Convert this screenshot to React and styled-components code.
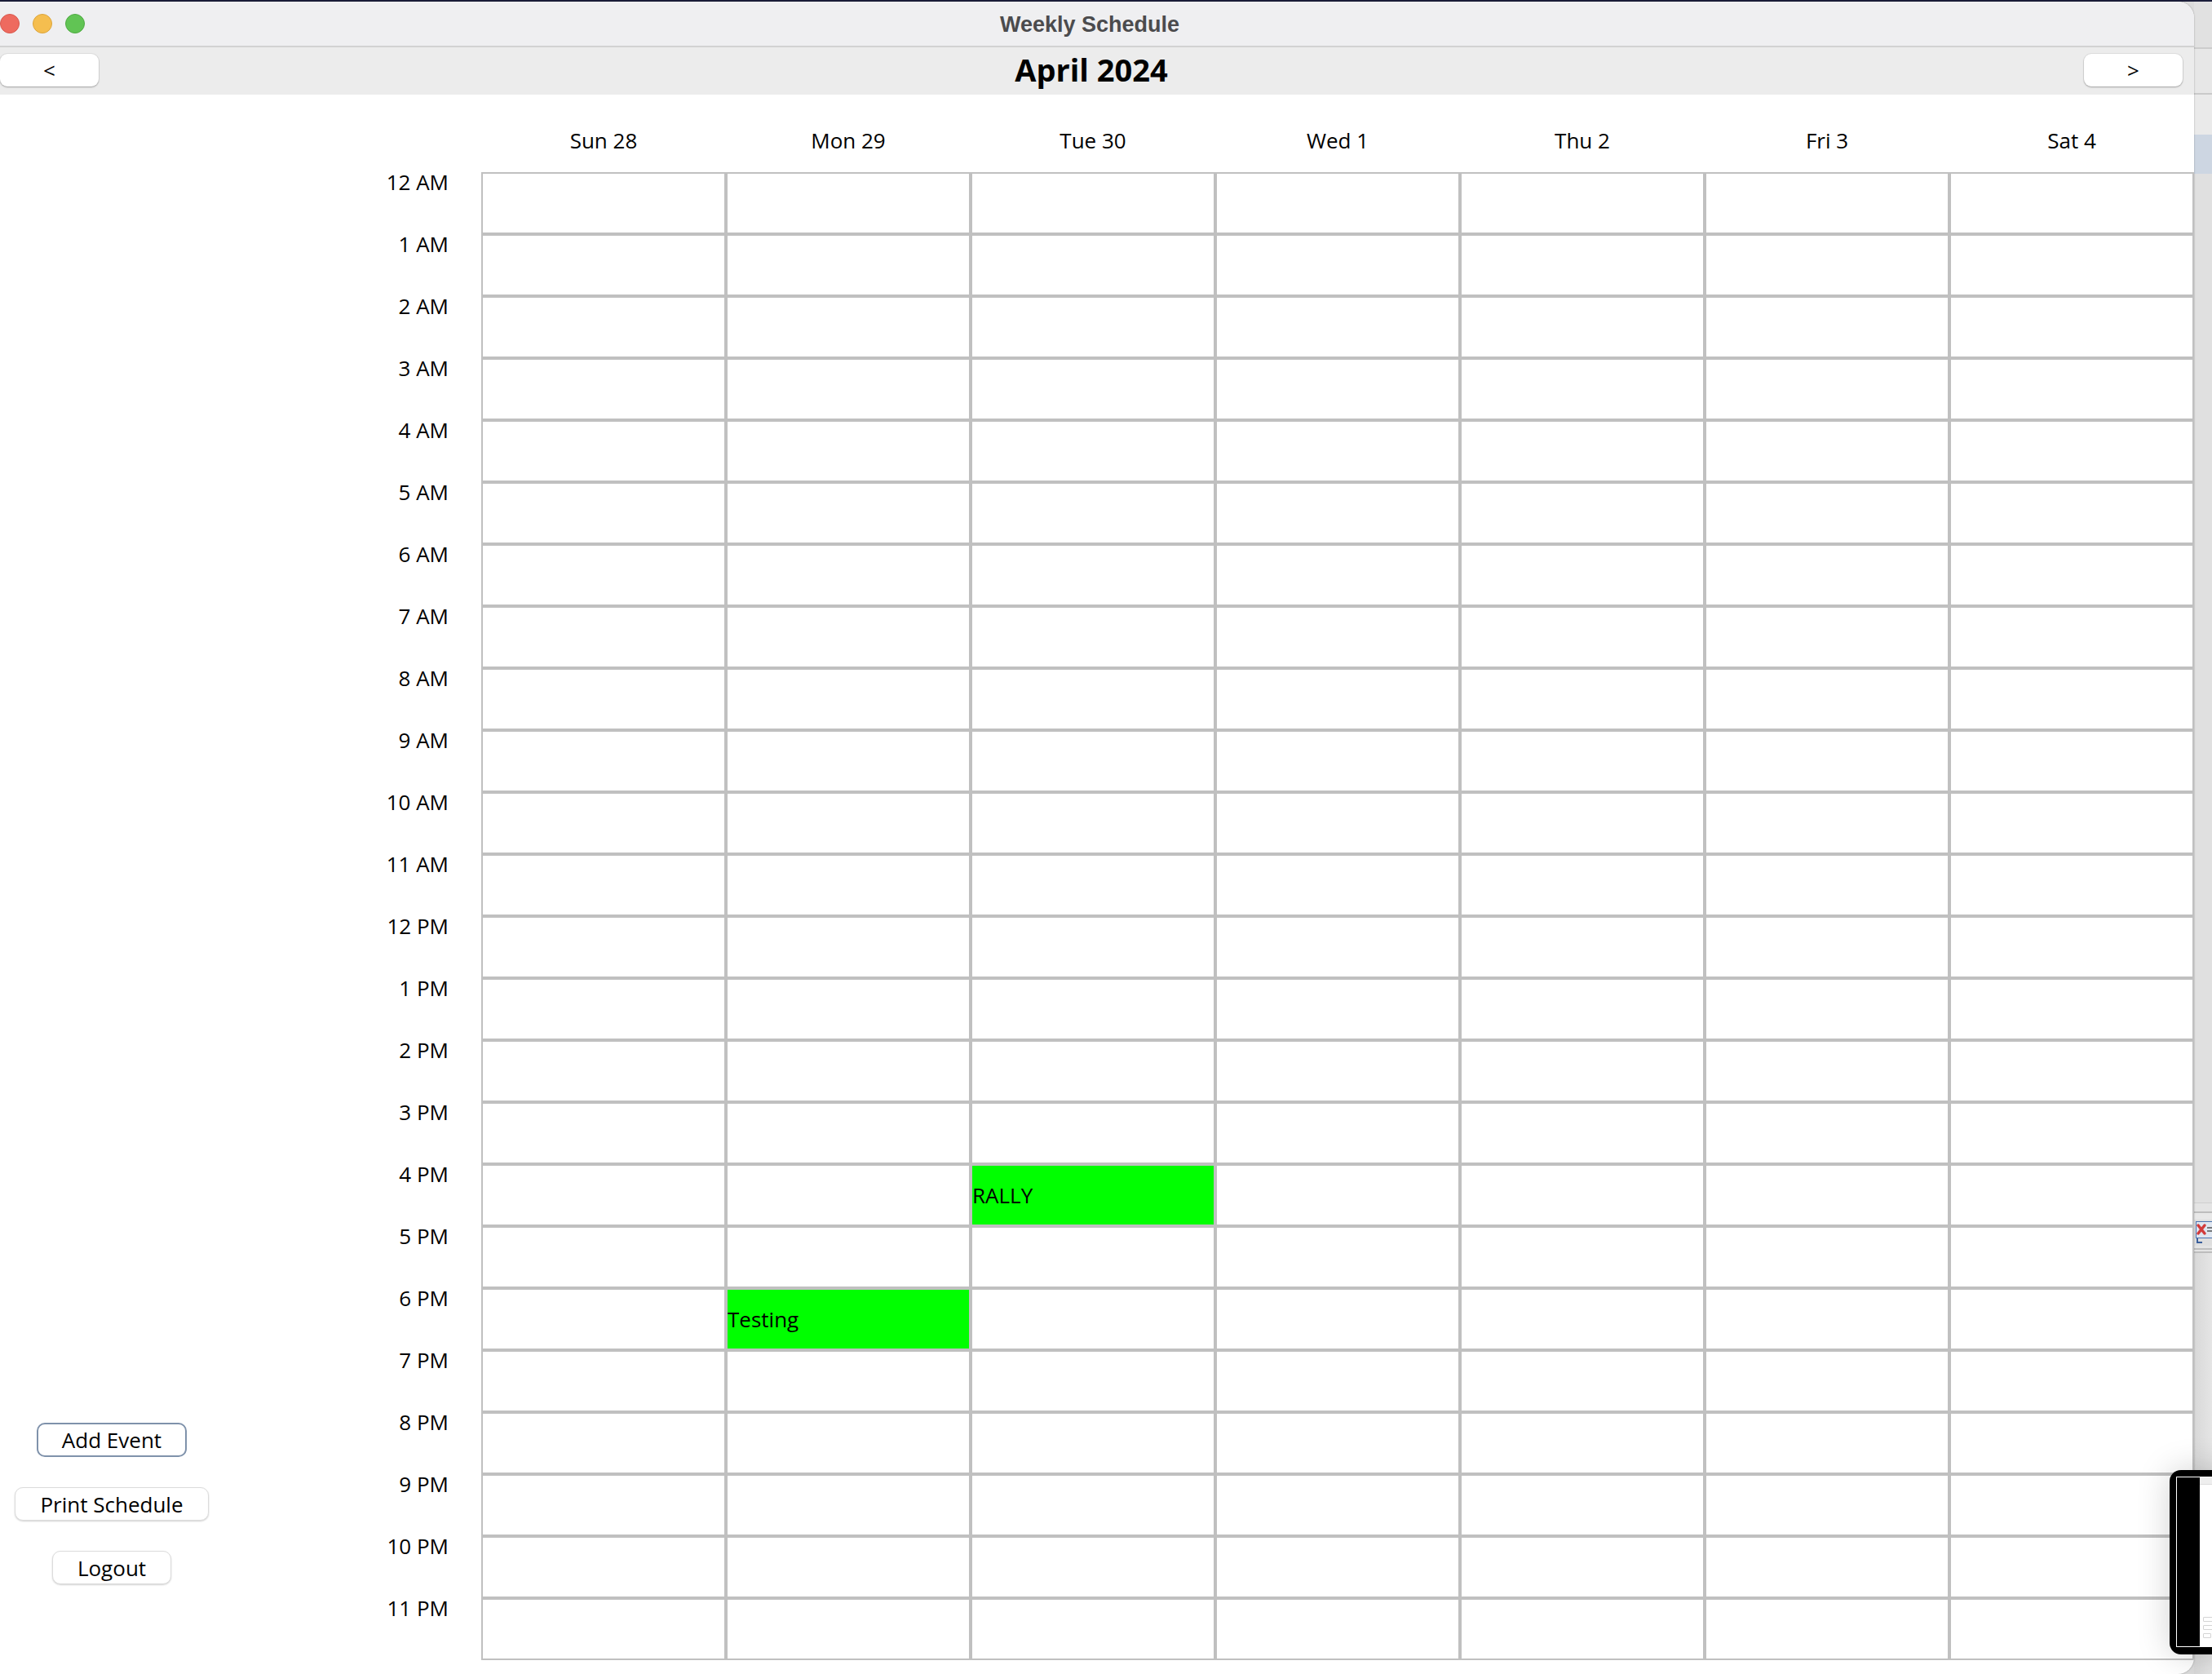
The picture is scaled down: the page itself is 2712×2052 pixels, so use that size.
import React from "react";
import styled, { createGlobalStyle } from "styled-components";

const GlobalStyle = createGlobalStyle`
  html, body {
    margin: 0;
    padding: 0;
    background: #dcdcdc;
    overflow: hidden;
  }
  body {
    font-family: "Open Sans", "Liberation Sans", sans-serif;
    color: #000;
  }
`;

const DAYS = ["Sun 28", "Mon 29", "Tue 30", "Wed 1", "Thu 2", "Fri 3", "Sat 4"];

const HOURS = Array.from({ length: 24 }, (_, i) => {
  const h = i % 12 === 0 ? 12 : i % 12;
  return `${h} ${i < 12 ? "AM" : "PM"}`;
});

// keyed by "day-hour"
const EVENTS = {
  "1-18": "Testing",
  "2-16": "RALLY",
};

// the desktop strip visible to the right of the window
const BACKDROP_TOP = [
  { height: 56, color: "#e1e1e1" },
  { height: 2, color: "#cccccc" },
  { height: 54, color: "#e7e7e7" },
  { height: 2, color: "#cacaca" },
  { height: 49, color: "#eaeaea" },
  { height: 48, color: "#cdd6e2" },
  { height: 1261, color: "#e0e0e0" },
  { height: 1, color: "#cfcfcf" },
  { height: 10, color: "#e4e4e4" },
  { height: 2, color: "#bdbdbd" },
  { height: 8, color: "#e8e8e8" },
];

const BACKDROP_BOTTOM = [
  { height: 3, color: "#e4e4e4" },
  { height: 2, color: "#bdbdbd" },
  { height: 2, color: "#e4e4e4" },
  { height: 2, color: "#bdbdbd" },
];

const Page = styled.div`
  position: relative;
  width: 2712px;
  height: 2052px;
  overflow: hidden;
  background: #dcdcdc;
`;

const TopEdge = styled.div`
  height: 2px;
  background: #1b1d3a;
`;

const Desk = styled.div`
  display: flex;
  height: 2050px;
`;

const Window = styled.div`
  position: relative;
  z-index: 1;
  flex: none;
  width: 2708px;
  margin-left: -18px;
  height: 100%;
  display: flex;
  flex-direction: column;
  background: #fff;
  border-radius: 20px;
  overflow: hidden;
  box-shadow: 0 0 2px rgba(0, 0, 0, 0.35);
`;

const Backdrop = styled.div`
  flex: 1;
  display: flex;
  flex-direction: column;
  background: linear-gradient(90deg, #d8d8d8, #e6e6e6);
`;

const Band = styled.div`
  flex: none;
  height: ${(p) => p.$height}px;
  background: ${(p) => p.$color};
`;

const IconBand = styled.div`
  flex: none;
  height: 32px;
  background: #dedede;
  display: flex;
  align-items: center;
  padding-left: 2px;
`;

const TitleBar = styled.div`
  height: 56px;
  display: grid;
  grid-template-columns: 1fr auto 1fr;
  align-items: center;
  background: #efeff1;
  border-bottom: 2px solid #d2d2d2;
  box-sizing: border-box;
`;

const Lights = styled.div`
  display: flex;
  gap: 16px;
  padding-left: 18px;
`;

const Light = styled.span`
  width: 24px;
  height: 24px;
  border-radius: 50%;
  box-sizing: border-box;
  background: ${(p) => p.$color};
  border: 1px solid ${(p) => p.$edge};
`;

const WindowTitle = styled.div`
  font-family: "Liberation Sans", Arial, sans-serif;
  font-weight: 700;
  font-size: 27px;
  color: #4b4b4d;
  line-height: 1;
  padding-top: 2px;
`;

const NavBar = styled.div`
  height: 58px;
  display: grid;
  grid-template-columns: 1fr auto 1fr;
  align-items: center;
  background: #ececec;
  padding: 0 14px 0 18px;
`;

const NavButton = styled.button`
  justify-self: ${(p) => (p.$end ? "end" : "start")};
  width: 121px;
  height: 40px;
  margin-top: -2px;
  border: none;
  border-radius: 9px;
  background: #fff;
  box-shadow: 0 0 0 1px rgba(0, 0, 0, 0.05), 0 1px 2px rgba(0, 0, 0, 0.28);
  font-family: "Open Sans", sans-serif;
  font-size: 26px;
  line-height: 1;
  color: #000;
  padding: 0;
`;

const Month = styled.div`
  font-weight: 700;
  font-size: 38px;
  line-height: 1;
  margin-top: -4px;
`;

const Body = styled.div`
  flex: 1;
  display: flex;
`;

const Sidebar = styled.div`
  width: 310px;
  flex: none;
  display: flex;
  flex-direction: column;
  align-items: center;
  justify-content: flex-end;
  gap: 37px;
  padding-bottom: 110px;
  box-sizing: border-box;
`;

const SideButton = styled.button`
  height: ${(p) => (p.$focused ? 42 : 41)}px;
  padding: 0 ${(p) => (p.$focused ? 29 : 30)}px;
  border-radius: 10px;
  background: #fff;
  border: ${(p) => (p.$focused ? "2px solid #7f92ab" : "1px solid #dcdcdc")};
  box-shadow: ${(p) =>
    p.$focused ? "none" : "0 1px 2px rgba(0, 0, 0, 0.18)"};
  font-family: "Open Sans", sans-serif;
  font-size: 26px;
  line-height: 1;
  color: #000;
`;

const Schedule = styled.div`
  display: grid;
  grid-template-columns: 298px repeat(7, 300px);
  grid-template-rows: 95px repeat(24, 76px);
  align-content: start;
`;

const DayHeader = styled.div`
  display: flex;
  align-items: center;
  justify-content: center;
  padding-top: 17px;
  font-size: 26px;
  line-height: 30px;
`;

const HourLabel = styled.div`
  text-align: right;
  padding: 1px 40px 0 0;
  font-size: 26px;
  line-height: 22px;
`;

const Cell = styled.div`
  box-sizing: border-box;
  border: 2px solid #c0c0c0;
  background: ${(p) => (p.$event ? "#00ff00" : "#fff")};
  display: flex;
  align-items: center;
  font-size: 26px;
  line-height: 30px;
  color: #000;
  white-space: nowrap;
  overflow: hidden;
`;

const Thumbnail = styled.div`
  position: absolute;
  z-index: 2;
  left: 2660px;
  top: 1802px;
  width: 90px;
  height: 226px;
  background: #000;
  border-radius: 14px;
  padding: 8px 0 9px 8px;
  box-sizing: border-box;
  display: flex;
  box-shadow: 0 0 40px rgba(0, 0, 0, 0.18);
`;

const ThumbFrame = styled.div`
  flex: 1;
  display: flex;
  border: 1px solid #fff;
  border-right: none;
`;

const ThumbShot = styled.div`
  margin-left: 28px;
  flex: 1;
  background: #fff;
  display: flex;
  flex-direction: column;
  justify-content: space-between;
`;

const ThumbBar = styled.div`
  height: 8px;
  background: #eeeeee;
  border-bottom: 1px solid #dddddd;
`;

const ThumbButtons = styled.div`
  display: flex;
  flex-direction: column;
  gap: 4px;
  padding: 0 0 10px 4px;
`;

const ThumbLine = styled.span`
  height: 4px;
  width: ${(p) => p.$w}px;
  border: 1px solid #d4d4d4;
  border-radius: 1px;
`;

const CloseIcon = () => (
  <svg width="22" height="30" viewBox="0 0 22 30">
    <rect x="0.5" y="1.5" width="24" height="20" fill="#dfe6f0" stroke="#4a72b0" />
    <path d="M3 6 L11 16 M11 6 L3 16" stroke="#d23b3b" strokeWidth="3.5" strokeLinecap="round" />
    <path d="M14 9 H20 M14 13 H20" stroke="#555" strokeWidth="1.5" />
    <path d="M2 22 V27 H8" stroke="#3a5f9c" strokeWidth="2" fill="none" />
  </svg>
);

const App = () => {
  return (
    <Page>
      <GlobalStyle />
      <TopEdge />
      <Desk>
        <Window>
          <TitleBar>
            <Lights>
              <Light $color="#ee6a5f" $edge="#d8594e" />
              <Light $color="#f5be4f" $edge="#dca53c" />
              <Light $color="#61c454" $edge="#4eaa42" />
            </Lights>
            <WindowTitle>Weekly Schedule</WindowTitle>
            <div />
          </TitleBar>

          <NavBar>
            <NavButton>&lt;</NavButton>
            <Month>April 2024</Month>
            <NavButton $end>&gt;</NavButton>
          </NavBar>

          <Body>
            <Sidebar>
              <SideButton $focused>Add Event</SideButton>
              <SideButton>Print Schedule</SideButton>
              <SideButton>Logout</SideButton>
            </Sidebar>

            <Schedule>
              <div />
              {DAYS.map((day) => (
                <DayHeader key={day}>{day}</DayHeader>
              ))}
              {HOURS.map((hour, h) => (
                <React.Fragment key={hour}>
                  <HourLabel>{hour}</HourLabel>
                  {DAYS.map((day, d) => {
                    const title = EVENTS[`${d}-${h}`];
                    return (
                      <Cell key={`${day}-${hour}`} $event={!!title}>
                        {title}
                      </Cell>
                    );
                  })}
                </React.Fragment>
              ))}
            </Schedule>
          </Body>
        </Window>

        <Backdrop>
          {BACKDROP_TOP.map(({ height, color }, i) => (
            <Band key={`t${i}`} $height={height} $color={color} />
          ))}
          <IconBand>
            <CloseIcon />
          </IconBand>
          {BACKDROP_BOTTOM.map(({ height, color }, i) => (
            <Band key={`b${i}`} $height={height} $color={color} />
          ))}
        </Backdrop>
      </Desk>

      <Thumbnail>
        <ThumbFrame>
          <ThumbShot>
            <ThumbBar />
            <ThumbButtons>
              <ThumbLine $w={10} />
              <ThumbLine $w={12} />
              <ThumbLine $w={8} />
            </ThumbButtons>
          </ThumbShot>
        </ThumbFrame>
      </Thumbnail>
    </Page>
  );
};

export default App;
